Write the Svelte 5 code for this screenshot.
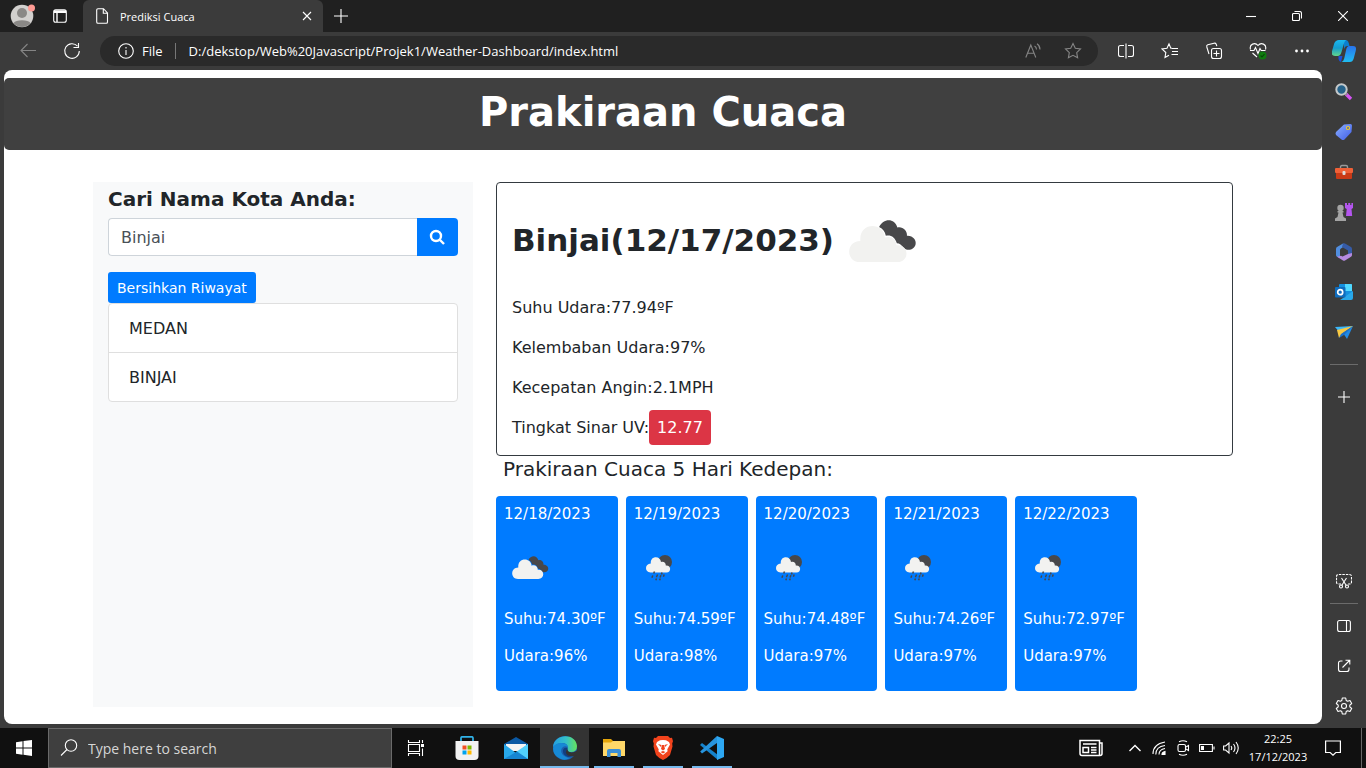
<script>
  let city = $state('Binjai');
  const history = ['MEDAN', 'BINJAI'];
  const readings = ['Suhu Udara:77.94ºF', 'Kelembaban Udara:97%', 'Kecepatan Angin:2.1MPH'];
  const days = [
    { date: '12/18/2023', temp: '74.30', hum: '96', rain: false },
    { date: '12/19/2023', temp: '74.59', hum: '98', rain: true },
    { date: '12/20/2023', temp: '74.48', hum: '97', rain: true },
    { date: '12/21/2023', temp: '74.26', hum: '97', rain: true },
    { date: '12/22/2023', temp: '72.97', hum: '97', rain: true }
  ];
</script>

{#snippet clouds()}
  <svg viewBox="0 0 100 100" aria-hidden="true">
    <path fill="#48484a" d="M47 36.500C51 27.500 63 26.500 66 37C71 35.500 76.500 40 76 45.500C82 45 86 50 85 54.500C84 60 77 62 73 58.500C70 55 68.500 53.500 65.500 53.500C63.500 47 59.500 44.500 54 45.500C53 41 51 38.500 47 36.500Z" />
    <path fill="#f2f2f0" d="M27 73C12 73 12 51 27.500 51C25.500 31 52 31 53 47.500C59 45 65 49 65 55.500C71 54.500 75.500 58.500 75.500 64C75.500 69 72 73 66 73Z" />
  </svg>
{/snippet}

{#snippet rainCloud()}
  <svg viewBox="0 0 52 52" aria-hidden="true">
    <circle cx="31" cy="21" r="7" fill="#48484a" />
    <path fill="#f2f2f0" d="M16.500 31.500C10.500 31.500 10.500 22.500 16.800 22.500C16 14.500 26.500 14.500 27 21C29.500 20 32 22 31.800 24.500C37.500 24 37.500 31.500 32.500 31.500Z" />
    <path d="M20.500 30.500l-.8 2M28 31.500l-.5 2M18.800 34.500l-.9 2.200M23.600 33.500l-1.200 2.700M27 34.200l-1 2.300M30.200 33.500l-.8 2.200M22.500 37.500l-.7 1.700M26.300 37.500l-.7 1.700" stroke="#48484a" stroke-width="1.500" />
  </svg>
{/snippet}

<div class="screen">
  <div class="titlebar">
    <button class="profile" aria-label="Profil">
      <svg width="26" height="24" viewBox="0 0 26 24"><circle cx="12" cy="12" r="11.300" fill="#d2d0ce" /><circle cx="12" cy="9" r="5" fill="#8a8886" /><path d="M3.500 19a9 4 0 0 1 17 0a11 11 0 0 1-17 0z" fill="#8a8886" /><circle cx="21.500" cy="4" r="3.500" fill="#ff9b94" /></svg>
    </button>
    <button class="workspace" aria-label="Ruang kerja">
      <svg class="line" width="16" height="16" viewBox="0 0 16 16"><rect x="1.700" y="1.700" width="12.600" height="12.600" rx="2" /><path d="M2 3h12M2 4.300h12M5 5v9" stroke-width="1.400" /></svg>
    </button>
    <div class="tab">
      <svg class="line" width="14" height="16" viewBox="0 0 14 16"><path d="M1.700 2q0-1.300 1.300-1.300h5.500L12.500 5v9q0 1.300-1.300 1.300H3q-1.300 0-1.300-1.300zM8.300 1v4.200h4" /></svg>
      <span>Prediksi Cuaca</span>
      <button aria-label="Tutup tab"><svg class="line" width="10" height="10" viewBox="0 0 10 10"><path d="M1 1l8 8M9 1L1 9" /></svg></button>
    </div>
    <button class="newtab" aria-label="Tab baru"><svg class="line" width="14" height="14" viewBox="0 0 14 14"><path d="M7 0v14M0 7h14" /></svg></button>
    <div class="grow"></div>
    <button class="win" aria-label="Kecilkan"><svg class="line" width="10" height="10" viewBox="0 0 10 10"><path d="M0 5.500h10" /></svg></button>
    <button class="win" aria-label="Pulihkan"><svg class="line" width="10" height="10" viewBox="0 0 10 10"><rect x=".5" y="2.500" width="7" height="7" rx="1" /><path d="M2.500.5h5q2 0 2 2v5" /></svg></button>
    <button class="win" aria-label="Tutup"><svg class="line" width="10" height="10" viewBox="0 0 10 10"><path d="M0 0l10 10M10 0L0 10" /></svg></button>
  </div>

  <div class="toolbar">
    <button class="tool dim" aria-label="Kembali"><svg class="line" width="16" height="16" viewBox="0 0 16 16"><path d="M16 7.500H1M7.500 1L1 7.500L7.500 14" /></svg></button>
    <button class="tool" aria-label="Muat ulang"><svg class="line" width="18" height="18" viewBox="0 0 18 18"><path d="M14.500 4.200A7.300 7.300 0 1 0 16.300 9M15.500 1v4.500h-5" /></svg></button>
    <div class="url">
      <svg class="line" width="16" height="16" viewBox="0 0 16 16"><circle cx="8" cy="8" r="7.300" /><path d="M8 7v5M8 4v1.500" /></svg>
      <span class="scheme">File</span>
      <input aria-label="Alamat" value="D:/dekstop/Web%20Javascript/Projek1/Weather-Dashboard/index.html" />
      <button class="dim" aria-label="Baca keras"><svg class="line" width="16" height="16" viewBox="0 0 16 16"><path d="M.8 14.500L5.800 2l5 12.500M2.500 10.300h6.600M9.500 3q2 1 2 3.500M12 .8q3 2 3 5.700" /></svg></button>
      <button class="dim" aria-label="Favorit"><svg class="line" width="18" height="18" viewBox="0 0 18 18"><path d="M9 1.500l2.300 4.800 5.200.7-3.800 3.600.9 5.200L9 13.300l-4.600 2.500.9-5.200L1.500 7l5.200-.7z" /></svg></button>
    </div>
    <button class="tool" aria-label="Layar terpisah"><svg class="line" width="16" height="16" viewBox="0 0 16 16"><path d="M6 2.500H2.500q-2 0-2 2v7q0 2 2 2H6M10 2.500h3.500q2 0 2 2v7q0 2-2 2H10M8 .5v15" /></svg></button>
    <button class="tool" aria-label="Daftar favorit"><svg class="line" width="18" height="18" viewBox="0 0 18 18"><path d="M11 6.300H9.800L8 1.800 6 6.300 1 7l3.800 3.500L4 15.500l4-2.300M11 6.500h6M11 9.500h6M10.500 12.500H17" /></svg></button>
    <button class="tool" aria-label="Koleksi"><svg class="line" width="18" height="18" viewBox="0 0 18 18"><rect x="6.500" y="6.500" width="10" height="10" rx="2" /><path d="M11.500 8.500v6M8.500 11.500h6M4 12L1.800 5q-.5-1.700 1-2.200L9 1.200q1.600-.4 2.200 1l.6 2M4.500 12" /></svg></button>
    <button class="tool" aria-label="Kesehatan peramban"><svg class="line" width="18" height="18" viewBox="0 0 18 18"><path d="M1.500 7.500C0 2 6 0 9 3.500C12 0 18 2 16.500 7.500M1 8.500h4l1.500-3 2.500 6 2-5 1.200 2h4.300M3.500 11L8 15" /><circle cx="13.500" cy="13.500" r="4" fill="#107c10" stroke="none" /><path d="M11.600 13.500l1.400 1.400 2.500-2.700" stroke="#084808" /></svg></button>
    <button class="tool" aria-label="Lainnya"><svg width="16" height="16" viewBox="0 0 16 16" fill="#fff"><circle cx="2.500" cy="8" r="1.400" /><circle cx="8" cy="8" r="1.400" /><circle cx="13.500" cy="8" r="1.400" /></svg></button>
    <button class="copilot" aria-label="Copilot">
      <svg width="24" height="24" viewBox="0 0 24 24"><defs><linearGradient id="c1" x2="0" y2="1"><stop stop-color="#1bb8f0" /><stop offset=".5" stop-color="#159ccf" /><stop offset="1" stop-color="#62d68b" /></linearGradient><linearGradient id="c2" x2="0" y2="1"><stop stop-color="#2873ec" /><stop offset="1" stop-color="#20bdf1" /></linearGradient></defs><path d="M12 1h2q2.500 0 3.500 6H15q-2 0-3 3z" fill="#0b7fd0" /><path d="M6.500 17h4L9 23q-2-.5-2.500-3z" fill="#1c50d8" /><path d="M7 1h7q-1.500 1-2 3.500L9.500 13q-1 4-4 4H3q-4.500 0-2.800-5.500l2-7Q3.500 1 7 1z" fill="url(#c1)" /><path d="M17 7h4q4 0 2.700 5l-2 7.500q-1 3.500-4 3.500H9.500q2-.5 2.700-3.500l2-9Q15 7 17 7z" fill="url(#c2)" /></svg>
    </button>
  </div>

  <div class="body">
    <main class="page">
      <header><h1>Prakiraan Cuaca</h1></header>
      <div class="container">
        <aside class="finder">
          <h2><label for="city">Cari Nama Kota Anda:</label></h2>
          <div class="search">
            <input id="city" bind:value={city} />
            <button aria-label="Cari"><svg width="16" height="16" viewBox="0 0 16 16" fill="none" stroke="#fff" stroke-width="2.400"><circle cx="7" cy="7" r="5" /><path d="M11 11l4 4" /></svg></button>
          </div>
          <button class="clear">Bersihkan Riwayat</button>
          <ul>{#each history as h}<li>{h}</li>{/each}</ul>
        </aside>
        <section class="result">
          <article class="now">
            <h3>Binjai(12/17/2023){@render clouds()}</h3>
            {#each readings as r}<p>{r}</p>{/each}
            <p>Tingkat Sinar UV:<span class="uv">12.77</span></p>
          </article>
          <h4>Prakiraan Cuaca 5 Hari Kedepan:</h4>
          <div class="days">
            {#each days as d}
              <article>
                <p>{d.date}</p>
                {#if d.rain}{@render rainCloud()}{:else}{@render clouds()}{/if}
                <p>Suhu:{d.temp}ºF</p>
                <p>Udara:{d.hum}%</p>
              </article>
            {/each}
          </div>
        </section>
      </div>
    </main>

    <nav class="side" aria-label="Bilah samping">
      <button aria-label="Pencarian"><svg width="18" height="18" viewBox="0 0 18 18"><path d="M11 11l5 5" stroke="#d553f4" stroke-width="3.400" /><path d="M10 10l2 2" stroke="#888" stroke-width="2" /><circle cx="6.500" cy="6.500" r="5.200" fill="#26638b" stroke="#c4c8ca" stroke-width="2" /></svg></button>
      <button aria-label="Belanja"><svg width="18" height="18" viewBox="0 0 18 18"><defs><linearGradient id="tg" y2="1"><stop stop-color="#8ab0ff" /><stop offset="1" stop-color="#405ce9" /></linearGradient></defs><path d="M9 1.500l6.500-.5q1.500 0 1.500 1.500L16.500 9 9.500 16.500q-1.500 1-3 0L1 12q-1-1.500 0-3z" fill="url(#tg)" /><circle cx="13" cy="5" r="1.500" fill="#4457b8" stroke="#f5cf25" stroke-width="1.200" /></svg></button>
      <button aria-label="Alat"><svg width="18" height="16" viewBox="0 0 18 16"><path d="M5.500 5V3q0-1.500 1.500-1.500h4q1.500 0 1.500 1.500v2" fill="none" stroke="#999" stroke-width="1.400" /><rect y="4" width="18" height="5" rx="1" fill="#ef6037" /><path d="M1 9h16v5q0 1-1 1H2q-1 0-1-1z" fill="#c93a17" /><rect x="7.500" y="7" width="3" height="4" rx="1" fill="#ddd" /></svg></button>
      <button aria-label="Game"><svg width="18" height="18" viewBox="0 0 18 18"><path d="M10 0h2v2h1.200V0h2v2h1.200V0H18v5l-1.500 1 .7 7H11l.7-7L10 5z" fill="#b455ef" /><g fill="#a4a4a4"><circle cx="5.500" cy="5" r="3.200" /><path d="M2.500 8h6v1.500H7.500L8.500 14 11 15.500V18H0v-2.500L2.500 14l1-4.500h-1z" /></g></svg></button>
      <button aria-label="Microsoft 365"><svg width="18" height="18" viewBox="0 0 18 18"><path d="M8 .5L2 4Q1 4.700 1 6v6q0 1 1 1.700L5 15V7q0-1 1-1.600L11 2z" fill="#518edf" /><path d="M8 .5q1-.5 2 0L16 4q1 .6 1 2v5l-4 1V7.500L7 4z" fill="#365ba6" /><path d="M17 10v2q0 1-1 1.700L10 17.500q-1 .5-2 0L2 13.700l4-1 1.500.8L13 11z" fill="#b68ae0" /></svg></button>
      <button aria-label="Outlook"><svg width="18" height="16" viewBox="0 0 18 16"><rect x="4" width="13" height="13" rx="1" fill="#1490df" /><path d="M10 0h6q1 0 1 1v6h-7z" fill="#50d9ff" /><path d="M5 16h11q2 0 2-2V7l-7 5z" fill="#28a8ea" /><rect y="3" width="10.500" height="10.500" rx="1" fill="#0f6cbd" /><circle cx="5.200" cy="8.200" r="2.500" fill="none" stroke="#fff" stroke-width="1.700" /></svg></button>
      <button aria-label="Kirim"><svg width="18" height="16" viewBox="0 0 18 16"><path d="M0 3L18 2 5 9z" fill="#3bb8fa" /><path d="M18 2L12 15 8 9z" fill="#218be5" /><path d="M2 6l16-4L8 9l-4 5z" fill="#f8c943" /><path d="M18 2L6 10l-2 4 5-3z" fill="#1b70c9" /></svg></button>
      <hr class="first" />
      <button aria-label="Tambah"><svg class="line" width="12" height="12" viewBox="0 0 12 12"><path d="M6 0v12M0 6h12" /></svg></button>
      <div class="grow"></div>
      <button aria-label="Tangkapan layar"><svg class="line" width="16" height="16" viewBox="0 0 16 16"><path d="M5 11H2.500q-2 0-2-2V3.500q0-2 2-2h11q2 0 2 2V9q0 2-2 2H12" stroke-dasharray="2.500 1" /><path d="M5.500 5l4.800 7.500M10.500 5l-4.800 7.500" /><circle cx="5" cy="13.500" r="1.500" /><circle cx="11" cy="13.500" r="1.500" /></svg></button>
      <hr />
      <button aria-label="Panel"><svg class="line" width="14" height="14" viewBox="0 0 14 14"><rect x=".6" y="1.500" width="12.800" height="11" rx="2" /><path d="M9.500 2v10" /></svg></button>
      <button aria-label="Buka tautan"><svg class="line" width="14" height="14" viewBox="0 0 14 14"><path d="M5.500 2H3.700Q1.500 2 1.500 4.200v6q0 2.300 2.200 2.300h6q2.300 0 2.300-2.300V8.500M5.500 8.500l7-7M8.500 1.200h4.300v4.300" /></svg></button>
      <button aria-label="Setelan"><svg class="line" width="18" height="18" viewBox="0 0 18 18"><path d="M7.300 1h3.400l.5 2.500 1.400.8 2.400-.8 1.700 3-1.900 1.700v1.600l1.900 1.700-1.700 3-2.400-.8-1.400.8-.5 2.500H7.300l-.5-2.500-1.400-.8-2.400.8-1.700-3 1.900-1.700V8.200L1.300 6.500l1.700-3 2.400.8 1.400-.8z" stroke-linejoin="round" /><circle cx="9" cy="9" r="2.500" /></svg></button>
    </nav>
  </div>

  <footer class="taskbar">
    <button class="start" aria-label="Mulai"><svg width="16" height="16" viewBox="0 0 16 16" fill="#fff"><path d="M0 2.200L6.500 1.300V7.500H0zM7.500 1.100L16 0v7.500H7.500zM0 8.500h6.500v6.200L0 13.800zM7.500 8.500H16V16l-8.500-1.200z" /></svg></button>
    <label class="find"><svg class="line" width="18" height="18" viewBox="0 0 18 18"><circle cx="11" cy="6.500" r="5.700" /><path d="M7 10.500L1 16.500" /></svg><input aria-label="Cari di Windows" placeholder="Type here to search" /></label>
    <button class="view" aria-label="Tampilan tugas"><svg class="line" width="18" height="16" viewBox="0 0 18 16"><path d="M1.500 0v2.500h11V0M1.500 16v-2.500h11V16M1.500 4.500h11v7h-11zM15.500 0v3M15.500 8.500V16" /><path d="M14 4h3v3h-3z" fill="#fff" stroke="none" /></svg></button>
    <button class="app" aria-label="Store"><svg width="24" height="24" viewBox="0 0 24 24"><path d="M6 6V2q0-1.200 1.200-1.200h9.600Q18 .8 18 2v4" fill="none" stroke="#31b2e8" stroke-width="1.700" /><path d="M.5 5h23v15q0 4-4 4h-15q-4 0-4-4z" fill="#f2f2f2" /><path d="M7.500 9.500h4v4h-4z" fill="#f25022" /><path d="M12.500 9.500h4v4h-4z" fill="#7fba00" /><path d="M7.500 14.500h4v4h-4z" fill="#00a4ef" /><path d="M12.500 14.500h4v4h-4z" fill="#ffb900" /></svg></button>
    <button class="app" aria-label="Mail"><svg width="24" height="24" viewBox="0 0 24 24"><path d="M0 8L12 1l12 7v3H0z" fill="#0b59a4" /><path d="M2 8h20v7H2z" fill="#f4f4f4" /><path d="M0 8l12 9L24 8v15H0z" fill="#28a8ea" /><path d="M24 8v15L12 16z" fill="#50d0fb" /><path d="M0 23L13 15.500 24 23z" fill="#1685d1" /></svg></button>
    <button class="app on active" aria-label="Edge"><svg width="24" height="24" viewBox="0 0 24 24"><defs><linearGradient id="eg"><stop stop-color="#249ee1" /><stop offset=".55" stop-color="#35c1c7" /><stop offset="1" stop-color="#66e25b" /></linearGradient></defs><circle cx="12" cy="12" r="12" fill="#1b5fae" /><path d="M0 11C1-3 23-3 24 10q0 6-6 6-5 0-3.500-3Q16 8 10 7 4 7 0 11z" fill="url(#eg)" /><path d="M0 12Q2 7 8 7q6 0 7 4-4-2-6 1-3 5 4 9 2 1 4 1-5 3-9 1Q0 20 0 12z" fill="#1789d5" /><path d="M14.500 12Q13 16 18 17q3 0 5.500-1.500Q20 21 15 21q-6-2-5-7 1-3 4.500-2z" fill="#123f80" /><path d="M14.500 13q0 3 4 3.500 3 0 5.500-2v5l-3 1q-2 0-6-1-4-3-.5-6.500z" fill="#333" /></svg></button>
    <button class="app on" aria-label="File Explorer"><svg width="22" height="18" viewBox="0 0 22 18"><path d="M0 0h8l2 2h11q1 0 1 1v14H0z" fill="#e5a50a" /><path d="M0 3.500h8L10 2h12v15H0z" fill="#ffd869" /><path d="M4 18v-6q0-2 2-2h10q2 0 2 2v6h-3.500v-4h-7v4z" fill="#3b8fd6" /></svg></button>
    <button class="app on" aria-label="Brave"><svg width="20" height="24" viewBox="0 0 20 24"><path d="M5 0h10l2 2 2-.2 1 3.500-.8 2.200.3 3L17 19q-2 2.500-7 5-5-2.500-7-5L.5 10.500l.3-3L0 5.300l1-3.500L3 2z" fill="#f2431c" /><path d="M10 4l3 .3 3 1.700 1 2.500-2.700 4.700.3 2L10 19l-4.600-3.800.3-2L3 8.500 4 6l3-1.700z" fill="#fff" /><path d="M5 8l3.500 1L8 11zM15 8l-3.500 1 .5 2zM9 9h2l1 4-2 1.500L8 13zM7.500 16l2.500-1 2.500 1-2.500 1.500z" fill="#f2431c" /></svg></button>
    <button class="app on" aria-label="Visual Studio Code"><svg width="24" height="24" viewBox="0 0 24 24"><path d="M0 9l2-2 16 12v5z" fill="#1583cc" /><path d="M17 0v7L2 17.500.2 15.500z" fill="#2794dd" /><path d="M17 0l7 3v18l-7 3z" fill="#2da7f2" /></svg></button>
    <div class="grow"></div>
    <button class="news" aria-label="Berita"><svg class="line" width="24" height="18" viewBox="0 0 24 18"><path d="M1 1.500h19.500v15H3q-2 0-2-2zM20.500 4H23v10.500q0 2-2 2h-2M4 5h13.500M12 8.500h5.500M12 11h5.500M12 13.500h5.500M4 8.500h5.500v5H4z" stroke-width="1.500" /></svg></button>
    <button class="tray" aria-label="Ikon tersembunyi"><svg class="line" width="12" height="8" viewBox="0 0 12 8"><path d="M.5 7L6 1.500 11.500 7" stroke-width="1.400" /></svg></button>
    <button class="tray" aria-label="Wi-Fi"><svg class="line" width="14" height="14" viewBox="0 0 14 14"><path d="M1 13Q1 3 13 1M3.800 13.500q0-8 9.200-9M7 13.500q0-5 6-6" /><path d="M10 13.500q0-2.500 3-3v3z" fill="#fff" /></svg></button>
    <button class="tray" aria-label="Rapat"><svg class="line" width="14" height="16" viewBox="0 0 14 16"><rect x="2" y="4.500" width="7.500" height="7" rx="1.500" /><path d="M10 7l2.500-1.500v5L10 9M3 1.700q4-2 8 0M3 14.300q4 2 8 0" /></svg></button>
    <button class="tray" aria-label="Baterai"><svg class="line" width="16" height="10" viewBox="0 0 16 10"><path d="M.6 1.500h12.800v7H.6zM15 3.500v3" /><path d="M2 3h3v4H2z" fill="#fff" stroke="none" /></svg></button>
    <button class="tray" aria-label="Suara"><svg class="line" width="16" height="14" viewBox="0 0 16 14"><path d="M.6 5h2L6 2v10L2.600 9h-2zM8 5q1.500 2 0 4M10.500 3q3 4 0 8M13 1q4.500 6 0 12" /></svg></button>
    <button class="clock"><span>22:25</span><span>17/12/2023</span></button>
    <button class="notes" aria-label="Notifikasi"><svg class="line" width="16" height="16" viewBox="0 0 16 16"><path d="M.6 1h14.800v11.500h-4.600L8 15.200 5.200 12.500H.6z" stroke-width="1.200" /></svg></button>
    <div class="desk"></div>
  </footer>
</div>

<style>
  :global(body) { margin: 0; background: #3b3b3b; }
  .screen { min-height: 100vh; display: flex; flex-direction: column; color: #fff; font-family: "Open Sans", "Noto Sans", sans-serif; }
  .screen * { box-sizing: border-box; }
  button { border: 0; padding: 0; margin: 0; background: none; color: inherit; font: inherit; display: flex; align-items: center; justify-content: center; flex: none; }
  svg { display: block; flex: none; }
  input { min-width: 0; border: 0; outline: 0; background: none; color: inherit; font: inherit; }
  h1, h2, h3, h4, p, ul { margin: 0; padding: 0; }
  .line { fill: none; stroke: currentColor; stroke-width: 1.1; }
  .grow { flex: 1; }
  .dim { color: #858585; }

  .titlebar { display: flex; height: 32px; background: #202020; }
  .profile { width: 44px; padding-left: 2px; }
  .workspace { width: 32px; }
  .tab { display: flex; align-items: center; gap: 11px; width: 240px; margin-left: 7px; padding: 0 11px 0 12px; background: #3b3b3b; border-radius: 6px 6px 0 0; font-size: 11px; }
  .tab button { margin-left: auto; }
  .newtab { width: 36px; }
  .win { width: 46px; }

  .toolbar { display: flex; align-items: center; height: 38px; padding-left: 6px; }
  .tool { width: 44px; height: 30px; }
  .copilot { width: 42px; padding-right: 2px; }
  .url { display: flex; align-items: center; flex: 1; min-width: 0; height: 30px; margin: 0 6px; padding: 0 5px 0 18px; background: #2a2a2a; border-radius: 15px; font-size: 13px; }
  .scheme { margin: 0 12px 0 8px; }
  .url input { flex: 1; height: 16px; padding: 0 0 0 13px; border-left: 1px solid #777; }
  .url button { width: 40px; }

  .body { display: flex; flex: 1; padding-left: 4px; }
  .page { flex: 1; min-width: 0; margin-bottom: 4px; padding-top: 8px; overflow: hidden; background: #fff; border-radius: 8px; color: #212529; font: 16px/24px "DejaVu Sans", Verdana, sans-serif; }
  header { padding: 10px 8px 14px; background: #404040; border-radius: 5px; color: #fff; text-align: center; }
  h1 { font-size: 40px; line-height: 48px; }
  .container { display: flex; max-width: 1140px; margin: 32px auto 16px; }
  .finder { flex: 0 0 33.3333%; padding: 5px 15px; background: #f8f9fa; }
  h2 { margin-bottom: 7px; font-size: 20px; line-height: 24px; }
  .search { display: flex; height: 38px; margin-bottom: 16px; }
  .search input { flex: 1; padding: 2px 12px 0; background: #fff; border: 1px solid #ced4da; border-right: 0; border-radius: 4px 0 0 4px; color: #495057; }
  .search button { width: 41px; background: #007bff; border-radius: 0 4px 4px 0; }
  .clear { height: 31px; padding: 0 9px; background: #007bff; border-radius: 3px; color: #fff; font-size: 14px; }
  ul { list-style: none; background: #fff; border: 1px solid #dfdfdf; border-radius: 4px; }
  li { padding: 13px 20px 11px; }
  li + li { border-top: 1px solid #dfdfdf; }
  .result { flex: 1; min-width: 0; margin-left: 23px; padding-bottom: 16px; }
  .now { padding: 9px 15px 15px; border: 1px solid #343a40; border-radius: 4px; }
  h3 { display: flex; align-items: center; height: 96px; margin-bottom: 8px; font-size: 31px; }
  h3 svg { width: 96px; height: 96px; }
  .now p + p { margin-top: 16px; }
  .uv { padding: 8px; background: #dc3545; border-radius: 4px; color: #fff; }
  h4 { padding: 1px 7px 0; margin-bottom: 15px; font-size: 20px; font-weight: 400; line-height: 24px; }
  .days { display: grid; grid-template-columns: repeat(5, 1fr); gap: 8px; max-width: 641px; }
  .days article { padding: 8px 8px 24px; display: grid; gap: 16px; background: #007bff; border-radius: 4px; color: #fff; font-size: 15px; line-height: 21px; }
  .days svg { width: 52px; height: 52px; }

  .side { display: flex; flex-direction: column; width: 44px; padding: 2px 0; }
  .side button { height: 40px; }
  hr { width: 28px; margin: 2px auto; border: 0; border-top: 1px solid #6b6b6b; }
  hr.first { margin: 12px auto; }

  .taskbar { display: flex; height: 40px; background: #101010; }
  .start { width: 48px; }
  .find { display: flex; align-items: center; gap: 10px; flex: 0 1 344px; padding: 0 11px; background: #3f3f3f; border: 1px solid #6a6a6a; }
  .find input { flex: 1; padding: 0; font-size: 14px; }
  .find input::placeholder { color: #d6d6d6; opacity: 1; }
  .view { width: 50px; padding-right: 2px; }
  .app { width: 49px; }
  .on { background: linear-gradient(#76b9ed, #76b9ed) 50% 100% / 40px 2px no-repeat; }
  .active { background: linear-gradient(#76b9ed, #76b9ed) 50% 100% / 100% 2px no-repeat #333; }
  .news { width: 64px; }
  .tray { width: 24px; }
  .clock { flex-direction: column; width: 66px; padding-left: 4px; font-size: 11px; line-height: 18px; }
  .notes { width: 48px; margin-right: 4px; }
  .desk { width: 5px; border-left: 1px solid #666; }
</style>
